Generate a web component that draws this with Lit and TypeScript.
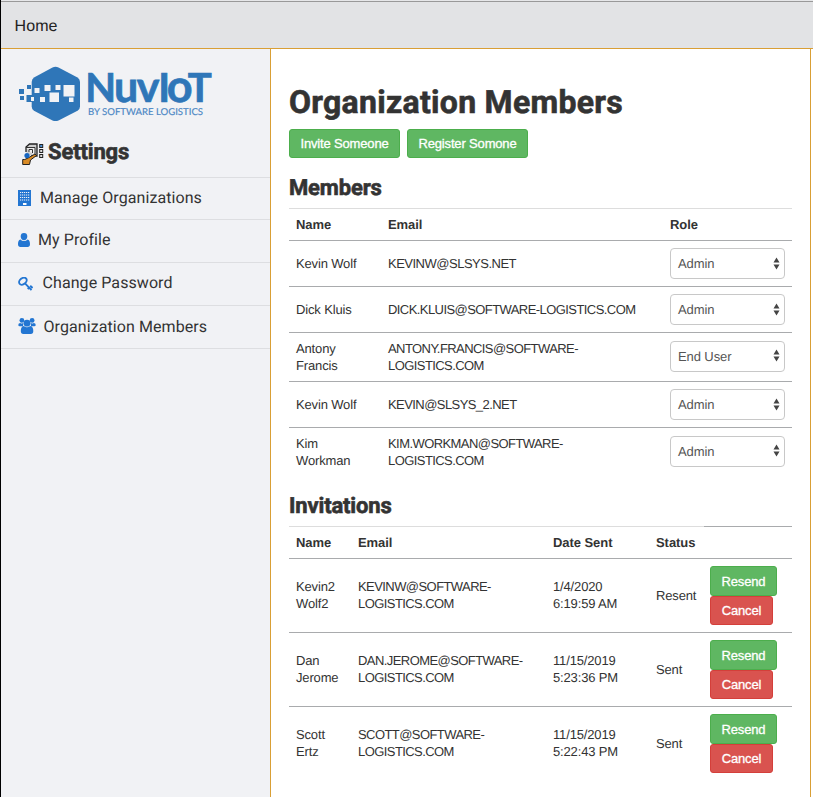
import { LitElement, html, css, svg } from "lit";
import { customElement } from "lit/decorators.js";

const logo = html`<svg class="logo" width="196" height="60" viewBox="18 64 196 60">
  <g fill="#2f76b8">
    <path d="M52.500 67.400Q55.500 66 58.500 67.400L77.500 77.400Q80 79 80 82V106.500Q80 109.300 77.500 110.800L58.500 120.400Q55.500 121.800 52.500 120.400L34 110.800Q31.700 109.300 31.700 106.500V82Q31.700 79 34 77.400Z"/>
    <path d="M19 89h5v5h-5zM20 96h4v4h-4zM27 85h4v4h-4zM26.500 95h6v7h-6z"/>
  </g>
  <path fill="#f1f2f5" d="M34.500 88h5v5h-5zM44.500 85h6v6h-6zM55.500 85h5v5h-5zM63.500 85h11v11.500h-11zM49.500 92.500h9.500v9.500h-9.500zM40 97h5v5h-5zM69 97.500h4.500v4.500h-4.500zM31 97h3v4h-3z"/>
  <text fill="#2f76b8" stroke="#2f76b8" stroke-width=".7" font-family="Lato" font-weight="700" font-size="40" y="101.700"><tspan x="85.300">N</tspan><tspan x="114" font-size="43">u</tspan><tspan x="136.800" font-size="43">v</tspan><tspan x="158.300">I</tspan><tspan x="166.800" font-size="45">o</tspan><tspan x="187.800">T</tspan></text>
  <text x="88" y="114.500" textLength="115" lengthAdjust="spacingAndGlyphs" fill="#4a86c4" stroke="#4a86c4" stroke-width=".15" font-family="Lato" font-size="9.500">BY SOFTWARE LOGISTICS</text>
</svg>`;

const icon = (c: unknown, vb: string, w: number, h: number) =>
  html`<svg class="icon" width=${w} height=${h} viewBox=${vb}>${c}</svg>`;

const nav = [
  { t: "Manage Organizations", k: "a", i: icon(svg`<path fill="#2376d2" d="M18 190h13v16H18z"/><path d="M20 192.500h9.500M20 195h9.500M20 197.500h9.500M20 200h9.500" stroke="#f1f2f5" stroke-width="1.100" stroke-dasharray="1.200 .8"/><path fill="#fff" d="M23 203h3.500v2H23z"/>`, "18 190 13 16", 13, 16) },
  { t: "My Profile", k: "b", i: icon(svg`<path fill="#2376d2" d="M6 0a3.300 3.500 0 0 1 3.300 3.600C9.300 5.800 7.800 7.300 6 7.300S2.700 5.800 2.700 3.600A3.300 3.500 0 0 1 6 0M2.600 6.400C3.500 7.600 4.700 8.100 6 8.100S8.500 7.600 9.400 6.400C11.600 6.800 12 9.100 12 11.300 12 13 11 14 9.700 14H2.300C1 14 0 13 0 11.300 0 9.100.4 6.800 2.600 6.400"/>`, "0 0 12 14", 12, 14) },
  { t: "Change Password", k: "c", i: icon(svg`<g fill="none" stroke="#2376d2" stroke-width="1.900"><ellipse cx="4.900" cy="4.200" rx="4.200" ry="3" transform="rotate(-38 4.900 4.200)"/><path d="M6.800 6.200l6.700 7M9.700 12l2-1.900M12.200 8.700l2.400 2.300"/></g>`, "0 0 15 15", 15, 15) },
  { t: "Organization Members", k: "d", i: icon(svg`<g fill="#2376d2"><circle cx="3.600" cy="2.400" r="2.400"/><circle cx="13.800" cy="2.400" r="2.400"/><circle cx="8.700" cy="5.200" r="3.400"/><path d="M2 5q1.500 1 3 .1L4.700 8.300H1.400Q0 8.300 0 7 0 5.200 2 5M15.400 5q-1.500 1-3 .1l.3 3.200h3.300q1.400 0 1.400-1.300 0-1.800-2-2M5.500 8q3.200 2.500 6.400 0 3.100.4 3.100 5 0 3-2.500 3H5q-2.500 0-2.500-3 0-4.600 3-5"/></g>`, "0 0 17.400 16", 18, 16) },
];
const members = [
  ["Kevin Wolf", "KEVINW@SLSYS.NET", "Admin"],
  ["Dick Kluis", "DICK.KLUIS@SOFTWARE-LOGISTICS.COM", "Admin"],
  ["Antony Francis", "ANTONY.FRANCIS@SOFTWARE-\nLOGISTICS.COM", "End User"],
  ["Kevin Wolf", "KEVIN@SLSYS_2.NET", "Admin"],
  ["Kim\nWorkman", "KIM.WORKMAN@SOFTWARE-\nLOGISTICS.COM", "Admin"],
];
const invites = [
  ["Kevin2\nWolf2", "KEVINW@SOFTWARE-\nLOGISTICS.COM", "1/4/2020\n6:19:59 AM", "Resent"],
  ["Dan\nJerome", "DAN.JEROME@SOFTWARE-\nLOGISTICS.COM", "11/15/2019\n5:23:36 PM", "Sent"],
  ["Scott\nErtz", "SCOTT@SOFTWARE-\nLOGISTICS.COM", "11/15/2019\n5:22:43 PM", "Sent"],
];

@customElement("app-root")
export class AppRoot extends LitElement {
  static styles = css`
    :host { display: block; height: 797px; box-sizing: border-box; border-left: 1px solid #000; overflow: hidden; background: #fff; color: #333; font: 13px/17px "Liberation Sans", sans-serif; text-rendering: geometricPrecision; }
    * { box-sizing: border-box; }
    .strip { height: 2px; background: #e6e7e9; border-bottom: 1px solid #999; }
    .top { height: 47px; background: #e2e3e5; border-bottom: 1px solid #d99f35; padding: 15px 13.500px 0; font: 16px/20px "Liberation Sans", sans-serif; color: #222; letter-spacing: .1px; }
    .body { display: flex; height: 748px; }
    .side { width: 270px; background: #f1f2f5; border-right: 1px solid #d99f35; }
    .logo { display: block; margin: 15px 0 0 17px; overflow: visible; }
    .settings { display: flex; height: 53px; padding: 14px 0 0 21px; gap: 4px; }
    .settings svg { margin-top: 5px; }
    h1, h2 { margin: 0; font-family: Roboto, sans-serif; font-weight: 700; white-space: nowrap; -webkit-text-stroke: .6px #333; }
    h2 { font-size: 22px; line-height: 28px; letter-spacing: -.15px; padding-top: 1px; height: 28px; }
    h1 { font-size: 32px; line-height: 44px; letter-spacing: .28px; padding-top: 1px; height: 44px; }
    .nav { border-top: 1px solid #dddee1; height: 43px; display: flex; padding-left: 17px; font: 16px/20px Roboto, sans-serif; letter-spacing: .08px; }
    .nav.a { height: 42px; } .nav.d { height: 44px; border-bottom: 1px solid #dddee1; }
    .nav .icon { margin-top: 12px; }
    .nav.a span { margin: 10px 0 0 9px; } .nav.b span { margin: 10px 0 0 8px; }
    .nav.c span { margin: 10px 0 0 9.500px; } .nav.d span { margin: 11px 0 0 7.500px; }
    .nav.b .icon { margin-top: 13px; } .nav.c .icon { margin-top: 14px; }
    .main { width: 540px; border-right: 1px solid #d99f35; padding: 30px 18px 0; }
    .actions { display: flex; gap: 7px; margin-top: 6px; }
    .btn { height: 29px; border: 1px solid #4cae4c; background: #5fb762; color: #fff; border-radius: 3px; font: 13px/27px "Liberation Sans", sans-serif; letter-spacing: -.16px; text-align: center; padding: 0; display: block; -webkit-text-stroke: .3px #fff; white-space: nowrap; }
    .btn.i { width: 111px; } .btn.r { width: 121px; }
    .btn.s { width: 67px; height: 30px; } .btn.x { width: 63px; background: #d9534f; border-color: #d43f3a; }
    .members { margin-top: 16px; } .inv { margin-top: 16px; }
    .row { display: grid; align-items: center; border-top: 1px solid #a9abad; padding: 7px 0 7px 7px; white-space: pre-line; letter-spacing: -.15px; }
    .row:not(.head) > :nth-child(2) { letter-spacing: -.57px; }
    .m:not(.head):nth-of-type(3) > :nth-child(2) { letter-spacing: -.5px; }
    .m { grid-template-columns: 92px 282px 115px; min-height: 46px; }
    .m > :first-child { width: 66px; }
    .m.tall { min-height: 49px; }
    .m.tall .select { margin: -1px 0 1px; }
    .v { grid-template-columns: 62px 195px 103px 54px 70px; height: 74px; }
    .v:not(.head) > span { padding-bottom: 2px; }
    .v:not(.head) > span:nth-child(4) { padding-bottom: 0; }
    .row.head { height: 32px; min-height: 0; border-color: #ddd; font-weight: 700; margin-top: 6px; padding: 6px 0 7px 7px; letter-spacing: -.06px; }
    .v.head { border-image: linear-gradient(90deg, #ddd 414px, #a9abad 414px) 1; border-width: 1px 0 0; }
    .select { height: 31px; border: 1px solid #c8c8c8; border-radius: 4px; display: flex; justify-content: space-between; align-items: center; padding: 0 4px 0 7px; color: #555; letter-spacing: -.1px; }
  `;
  render() {
    return html`
      <div class="strip"></div>
      <header class="top">Home</header>
      <div class="body">
        <nav class="side">
          ${logo}
          <div class="settings">
            <svg width="22" height="24" viewBox="0 0 22 24">
              <path d="M4 9V4l3.500-3H15v12H9" fill="#ccc" stroke="#222" stroke-width="1.300"/>
              <path d="M4 4.500h9V13M7 9V6.500h3.500V10" stroke="#333" fill="#eee"/>
              <rect x="17.700" y="1.500" width="3" height="3" fill="#4c92d8" stroke="#222"/>
              <rect x="17.700" y="6.500" width="3" height="3" fill="#ddd" stroke="#222"/><rect x="17.700" y="11.500" width="3" height="3" fill="#ddd" stroke="#222"/>
              <path d="M.7 21.500v-5h2l3.300-1.500 7-4 1.500 1.500L8.500 17l-1 4.500z" fill="#d98b25" stroke="#222"/>
              <circle cx="5" cy="12.500" r="2.600" fill="#1665c0"/>
            </svg>
            <h2>Settings</h2>
          </div>
          ${nav.map((n) => html`<div class="nav ${n.k}">${n.i}<span>${n.t}</span></div>`)}
        </nav>
        <main class="main">
          <h1>Organization Members</h1>
          <div class="actions"><button class="btn i">Invite Someone</button><button class="btn r">Register Somone</button></div>
          <h2 class="members">Members</h2>
          <div class="row m head"><span>Name</span><span>Email</span><span>Role</span></div>
          ${members.map((r) => html`<div class="row m ${r[1].includes("\n") ? "tall" : ""}"><span>${r[0]}</span><span>${r[1]}</span><div class="select"><span>${r[2]}</span><svg width="7" height="14" viewBox="0 0 7 14"><path fill="#444" d="M3.500 .5 6.500 5.500H.5zM3.500 12.500.5 7.500h6z"/></svg></div></div>`)}
          <h2 class="inv">Invitations</h2>
          <div class="row v head"><span>Name</span><span>Email</span><span>Date Sent</span><span>Status</span></div>
          ${invites.map((r) => html`<div class="row v">${r.map((c) => html`<span>${c}</span>`)}<div><button class="btn s">Resend</button><button class="btn x">Cancel</button></div></div>`)}
        </main>
      </div>`;
  }
}
